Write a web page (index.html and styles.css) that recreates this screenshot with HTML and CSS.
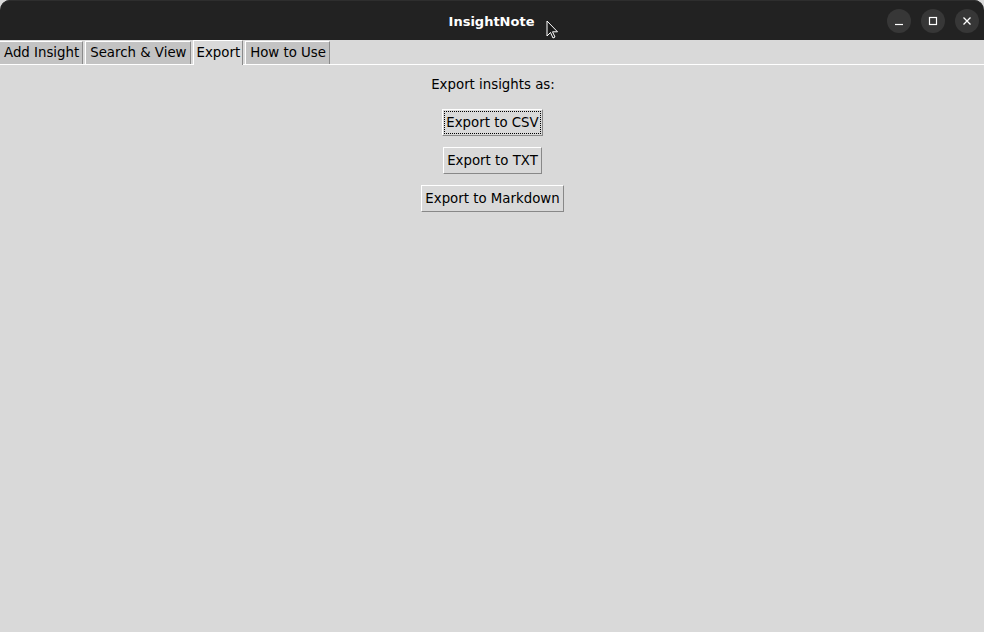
FILE: index.html
```html
<!DOCTYPE html>
<html>
<head>
<meta charset="utf-8">
<link rel="stylesheet" href="styles.css">
</head>
<body>
<div class="window">
  <header class="titlebar">
    <div class="title">InsightNote</div>
    <div class="controls">
      <span class="ctl"><svg width="10" height="10" viewBox="0 0 10 10"><path d="M1 8.5h8" stroke="#fff" stroke-width="1.2"/></svg></span>
      <span class="ctl"><svg width="10" height="10" viewBox="0 0 10 10"><rect x="1.5" y="1.5" width="7" height="7" fill="none" stroke="#fff" stroke-width="1.2"/></svg></span>
      <span class="ctl"><svg width="10" height="10" viewBox="0 0 10 10"><path d="M1.5 1.5l7 7M8.5 1.5l-7 7" stroke="#fff" stroke-width="1.3"/></svg></span>
    </div>
    <svg class="cursor" width="14" height="20" viewBox="0 0 14 20"><path d="M1 1v15l3.5-3.5 2.5 5.5 2-1-2.5-5.2h5z" fill="#1a1a1a" stroke="#fff" stroke-width="1"/></svg>
  </header>
  <nav class="tabs">
    <span class="tab">Add Insight</span>
    <span class="tab">Search &amp; View</span>
    <span class="tab active">Export</span>
    <span class="tab">How to Use</span>
  </nav>
  <main class="content">
    <div class="label">Export insights as:</div>
    <button class="btn focused"><span class="inner">Export to CSV</span></button>
    <button class="btn"><span class="inner">Export to TXT</span></button>
    <button class="btn"><span class="inner">Export to Markdown</span></button>
  </main>
</div>
</body>
</html>
```

FILE: styles.css
```css
html, body {
  margin: 0;
  padding: 0;
  background: #202020;
}
.window {
  width: 984px;
  height: 632px;
  display: flex;
  flex-direction: column;
  background: #d9d9d9;
  font-family: "DejaVu Sans", sans-serif;
  font-size: 13.33px;
  color: #000;
  overflow: hidden;
}
.titlebar {
  position: relative;
  height: 40px;
  flex: none;
  background: #222222;
  border-radius: 10px 10px 0 0;
  display: flex;
  align-items: center;
  justify-content: center;
  box-shadow: inset 0 1px 0 #2e2e2e;
}
.title {
  color: #fff;
  font-weight: bold;
  font-size: 13px;
  margin-left: -1px;
  margin-top: 2px;
}
.controls {
  position: absolute;
  right: 5px;
  top: 9px;
  display: flex;
  gap: 10px;
}
.ctl {
  width: 24px;
  height: 24px;
  border-radius: 50%;
  background: #373737;
  display: flex;
  align-items: center;
  justify-content: center;
}
.cursor {
  position: absolute;
  left: 546px;
  top: 20px;
}
.tabs {
  flex: none;
  height: 24px;
  display: flex;
  align-items: flex-end;
  gap: 2px;
  border-bottom: 1px solid #ffffff;
  background: #d9d9d9;
}
.tab {
  height: 22px;
  line-height: 22px;
  padding: 0 3px 0 4px;
  background: #c3c3c3;
  border-top: 1px solid #ffffff;
  border-left: 1px solid #ffffff;
  border-right: 1px solid #8a8a8a;
}
.tab:first-child {
  border-left: none;
}
.tab.active {
  background: #d9d9d9;
  height: 24px;
  line-height: 23px;
  padding: 0 2px 0 3px;
  margin-bottom: -1px;
}
.content {
  flex: 1;
  display: flex;
  flex-direction: column;
  align-items: center;
  padding-top: 10px;
}
.label {
  height: 19px;
  line-height: 19px;
  margin-left: 2px;
}
.btn {
  font: inherit;
  color: #000;
  background: #d9d9d9;
  border-top: 1px solid #ffffff;
  border-left: 1px solid #ffffff;
  border-right: 1px solid #888888;
  border-bottom: 1px solid #888888;
  border-radius: 0;
  padding: 1px;
  margin-top: 11px;
  height: 27px;
  margin-left: 1px;
}
.btn.focused {
  margin-top: 15px;
}
.inner {
  display: block;
  padding: 0 1px;
  line-height: 21px;
  border: 1px dotted transparent;
}
.btn.focused .inner {
  border-color: #000;
}
```
